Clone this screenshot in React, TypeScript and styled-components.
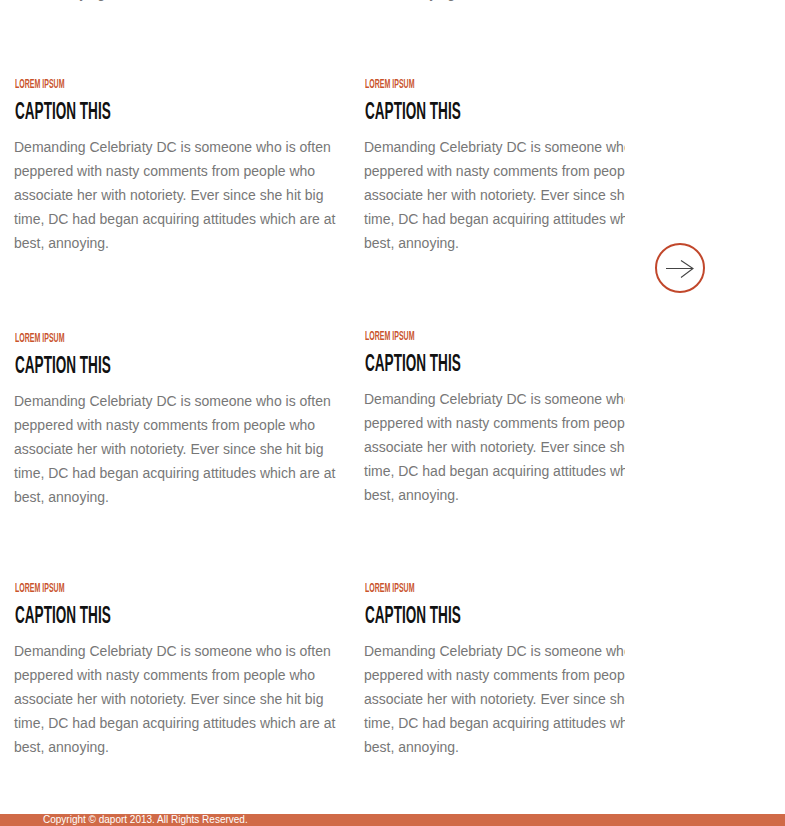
import styled, { createGlobalStyle } from "styled-components";

const GlobalStyle = createGlobalStyle`
  html, body {
    margin: 0;
    padding: 0;
    background: #fff;
    overflow: hidden;
  }
  body {
    font-family: "Liberation Sans", Arial, sans-serif;
  }
`;

const Page = styled.div`
  position: relative;
  height: 826px;
  overflow: hidden;
`;

const Slider = styled.div`
  width: 625px;
  overflow: hidden;
  margin-top: -174px;
`;

const Row = styled.div<{ $gap: number }>`
  display: flex;
  padding-left: 14px;
  margin-bottom: ${(p) => p.$gap}px;
`;

const Card = styled.div<{ $shift?: number }>`
  flex: 0 0 330px;
  width: 330px;
  margin-right: 20px;
  margin-top: ${(p) => p.$shift || 0}px;
`;

const Label = styled.div`
  height: 16px;
  margin-left: 1px;
  font-family: "Liberation Sans", sans-serif;
  font-weight: 700;
  font-size: 13px;
  line-height: 16px;
  color: #c9532c;
  transform: scaleX(0.54);
  transform-origin: left center;
  white-space: nowrap;
`;

const Caption = styled.h3`
  margin: 5px 0 0 1px;
  height: 28px;
  font-family: "Liberation Sans", sans-serif;
  font-weight: 700;
  font-size: 23px;
  line-height: 28px;
  color: #111;
  transform: scaleX(0.59);
  transform-origin: left center;
  white-space: nowrap;
`;

const Text = styled.p`
  margin: 10px 0 0;
  font-size: 14px;
  line-height: 24px;
  color: #777;
  width: 330px;
`;

const NextButton = styled.button`
  position: absolute;
  left: 655px;
  top: 243px;
  width: 50px;
  height: 50px;
  padding: 0;
  border: 2px solid #c1472b;
  border-radius: 50%;
  background: #fff;
  display: flex;
  align-items: center;
  justify-content: center;
  cursor: pointer;
`;

const Footer = styled.footer`
  position: absolute;
  left: 0;
  right: 0;
  top: 814px;
  height: 30px;
  background: #d06a47;
  padding-left: 43px;
  font-size: 10px;
  line-height: 12px;
  color: #fff;
`;

const body =
  "Demanding Celebriaty DC is someone who is often peppered with nasty comments from people who associate her with notoriety. Ever since she hit big time, DC had began acquiring attitudes which are at best, annoying.";

const rows = [
  { gap: 71, shift: 0 },
  { gap: 75, shift: 0 },
  { gap: 71, shift: -2 },
  { gap: 0, shift: 0 },
];

function Item({ shift }: { shift?: number }) {
  return (
    <Card $shift={shift}>
      <Label>LOREM IPSUM</Label>
      <Caption>CAPTION THIS</Caption>
      <Text>{body}</Text>
    </Card>
  );
}

export default function App() {
  return (
    <Page>
      <GlobalStyle />
      <Slider>
        {rows.map((r, i) => (
          <Row key={i} $gap={r.gap}>
            <Item />
            <Item shift={r.shift} />
          </Row>
        ))}
      </Slider>
      <NextButton aria-label="next">
        <svg width="46" height="46" viewBox="0 0 46 46">
          <path
            d="M9 23.5 H36 M24 15.5 L36 23.5 L24 32.5"
            fill="none"
            stroke="#444"
            strokeWidth="1.1"
          />
        </svg>
      </NextButton>
      <Footer>Copyright © daport 2013. All Rights Reserved.</Footer>
    </Page>
  );
}
